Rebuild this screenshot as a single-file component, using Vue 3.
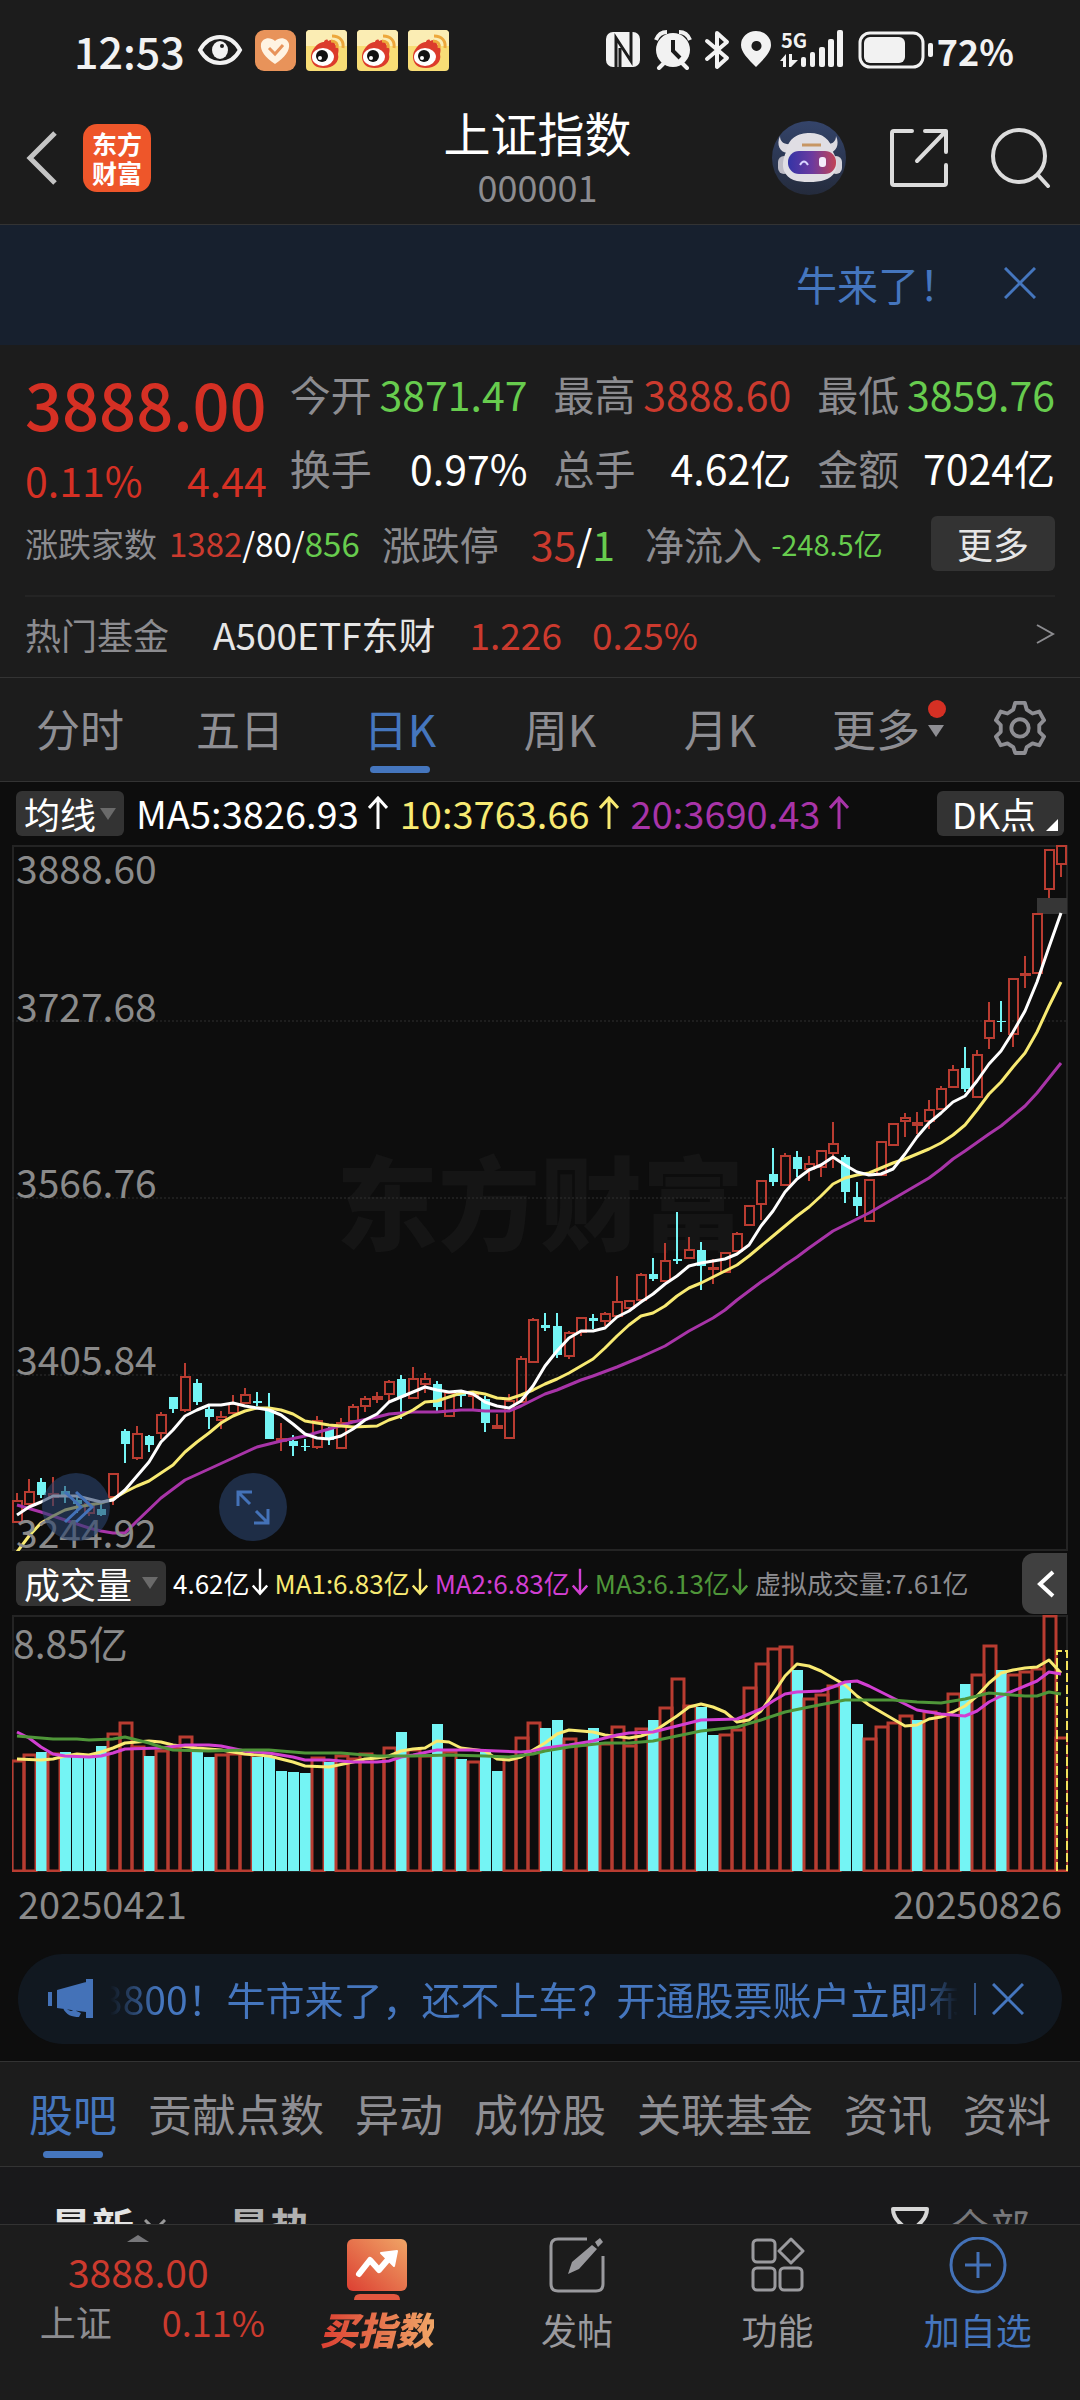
<template>
  <div class="app">
    <div class="status">
      <span class="clock">12:53</span>
      <svg class="eye" viewBox="0 0 46 32">
        <path d="M3 16C8 7 15 3 23 3s15 4 20 13c-5 9-12 13-20 13S8 25 3 16z" fill="none" stroke="#f2f2f2" stroke-width="4" />
        <ellipse cx="23" cy="16" rx="8" ry="9" fill="#f2f2f2" />
        <circle cx="25" cy="12" r="2" fill="#1c1c1c" />
      </svg>
      <svg class="app-icon" viewBox="0 0 41 41">
        <rect width="41" height="41" rx="9" fill="#e8935a" />
        <path d="M20 34C10 27 5 21 6 14c1-6 9-8 14-3 5-5 13-3 14 3 1 7-4 13-14 20z" fill="#fff3e2" />
        <path d="M14 18l6 6 8-9" fill="none" stroke="#e8935a" stroke-width="3" />
      </svg>
      <svg v-for="n in 3" :key="n" class="app-icon" viewBox="0 0 41 41">
        <rect width="41" height="41" rx="4" fill="#f8dd76" />
        <path d="M0 4a4 4 0 0 1 4-4h33a4 4 0 0 1 4 4v12H0z" fill="#fbedb4" />
        <path d="M5 28C4 20 13 11 18 12c0-2 4-4 4-1 4-2 8-1 7 4 4 1 4 5 3 9 2 8-5 14-14 14S6 34 5 28z" fill="#dc3b2c" />
        <ellipse cx="17" cy="27" rx="11" ry="9" fill="#fff" />
        <circle cx="16" cy="26" r="6" fill="#111" />
        <circle cx="14" cy="28" r="2" fill="#fff" />
        <path d="M25 11c5 0 7 3 6 7M26 6c8 0 12 5 11 12" fill="none" stroke="#eda83c" stroke-width="3" />
      </svg>
      <svg class="sys" viewBox="0 0 240 40">
        <g fill="#f2f2f2">
          <rect x="0" y="2" width="34" height="35" rx="7" />
          <path d="M10 37V8l15 23V2M14 37V18" fill="none" stroke="#1c1c1c" stroke-width="3" />
          <circle cx="67" cy="20" r="17" />
          <path d="M67 10v11l7 7" fill="none" stroke="#1c1c1c" stroke-width="4" />
          <path d="M50 10q3-8 11-8M84 10q-3-8-11-8" fill="none" stroke="#f2f2f2" stroke-width="4" />
          <path d="M58 33l-5 5M76 33l5 5" stroke="#f2f2f2" stroke-width="4" stroke-linecap="round" />
          <path d="M101 11l20 17-10 9V3l10 9-20 17" fill="none" stroke="#f2f2f2" stroke-width="4" stroke-linejoin="round" stroke-linecap="round" />
          <path fill-rule="evenodd" d="M150 37c-8-8-15-15-15-22a15 14 0 0 1 30 0c0 7-7 14-15 22zM150 11a5 5 0 1 0 1 0z" />
          <path d="M174 31l6-7v13h-3v-6zM183 24h3v6h6l-7 7h-2z" />
          <rect x="195" y="27" width="5" height="10" rx="2" />
          <rect x="204" y="22" width="5" height="15" rx="2" />
          <rect x="213" y="17" width="6" height="20" rx="2" />
          <rect x="222" y="9" width="6" height="28" rx="2" />
          <rect x="231" y="0" width="6" height="37" rx="2" />
          <text x="175" y="18" class="net">5G</text>
        </g>
      </svg>
      <svg class="battery" viewBox="0 0 76 40">
        <rect x="2" y="3" width="63" height="34" rx="10" fill="none" stroke="#f2f2f2" stroke-width="3" />
        <rect x="6" y="7" width="41" height="26" rx="6" fill="#f2f2f2" />
        <rect x="70" y="13" width="5" height="14" rx="2" fill="#f2f2f2" />
      </svg>
      <span class="percent">72%</span>
    </div>

    <header>
      <div class="side">
        <button class="icon-btn" aria-label="返回">
          <svg class="back" viewBox="0 0 36 56"><path d="M31 3L6 28l25 25" fill="none" stroke="#c4c4c4" stroke-width="5" /></svg>
        </button>
        <a href="#" class="logo"><span>东方</span><span>财富</span></a>
      </div>
      <div class="title">
        <h1>上证指数</h1>
        <p>000001</p>
      </div>
      <div class="side right">
        <button class="icon-btn" aria-label="助手">
          <svg class="bot" viewBox="0 0 75 75">
            <defs>
              <linearGradient id="visor" x1="0" x2="1">
                <stop offset="0" stop-color="#3434a6" />
                <stop offset="0.5" stop-color="#6b3a9f" />
                <stop offset="1" stop-color="#c24456" />
              </linearGradient>
              <linearGradient id="botBg" x1="0" y1="0" x2="0" y2="1">
                <stop offset="0" stop-color="#34446a" />
                <stop offset="1" stop-color="#242b3c" />
              </linearGradient>
            </defs>
            <circle cx="37" cy="37" r="37" fill="url(#botBg)" />
            <path d="M8 15c-4 9 0 16 7 17l8-10C14 25 8 22 8 15zM64 15c4 9 0 16-7 17l-8-10c9 3 15 0 15-7z" fill="#dcdae0" />
            <rect x="6" y="35" width="12" height="18" rx="6" fill="#bdbbc5" />
            <rect x="58" y="35" width="12" height="18" rx="6" fill="#d5d3da" />
            <path d="M14 31C16 17 26 12 38 12s21 6 23 19c4 7 5 14 2 20-5 8-14 10-26 10s-21-2-25-11c-2-6-1-12 2-19z" fill="#e0dee4" />
            <rect x="16" y="30" width="48" height="23" rx="11" fill="url(#visor)" />
            <path d="M30 24h19" stroke="#c79664" stroke-width="3" />
            <path d="M28 44q4-7 8 0" fill="none" stroke="#d8d4ff" stroke-width="2" />
            <rect x="47" y="36" width="7" height="10" rx="3" fill="#f3ecfb" />
          </svg>
        </button>
        <button class="icon-btn" aria-label="分享">
          <svg class="share" viewBox="0 0 60 60">
            <path d="M23 3H5q-2 0-2 2v50q0 2 2 2h50q2 0 2-2V37M36 3h21v21M57 3L28 33" fill="none" stroke="#dcdcdc" stroke-width="4" stroke-linecap="round" stroke-linejoin="round" />
          </svg>
        </button>
        <button class="icon-btn" aria-label="搜索">
          <svg class="search" viewBox="0 0 60 60">
            <circle cx="28" cy="28" r="26" fill="none" stroke="#dcdcdc" stroke-width="4" />
            <path d="M47 47l10 11" stroke="#dcdcdc" stroke-width="4" stroke-linecap="round" />
          </svg>
        </button>
      </div>
    </header>

    <div class="banner">
      <a href="#">牛来了！</a>
      <button class="icon-btn" aria-label="关闭">
        <svg class="cross" viewBox="0 0 32 32"><path d="M1 1l30 30M31 1L1 31" stroke="#4576be" stroke-width="3" /></svg>
      </button>
    </div>

    <section class="quote">
      <div class="summary">
        <div class="now">
          <strong>3888.00</strong>
          <p><span>0.11%</span><span>4.44</span></p>
        </div>
        <dl class="stats">
          <div v-for="s in stats" :key="s.label">
            <dt>{{ s.label }}</dt>
            <dd :class="s.tone">{{ s.value }}</dd>
          </div>
        </dl>
      </div>
      <div class="breadth">
        <p class="small"><span>涨跌家数</span><b><i class="up">1382</i>/80/<i class="down">856</i></b></p>
        <p class="limit"><span>涨跌停</span><b><i class="up">35</i>/<i class="down">1</i></b></p>
        <p class="flow"><span>净流入</span><b class="down">-248.5亿</b></p>
        <button class="more">更多</button>
      </div>
      <a href="#" class="fund">
        <span class="muted">热门基金</span>
        <span class="fund-name">A500ETF东财</span>
        <span class="up">1.226</span>
        <span class="up">0.25%</span>
        <svg class="arrow" viewBox="0 0 20 20"><path d="M2 1l16 9-16 9" fill="none" stroke="#8c8c90" stroke-width="2" /></svg>
      </a>
    </section>

    <nav class="periods">
      <button v-for="p in periods" :key="p" :class="{ active: p === period }" @click="period = p">
        {{ p }}
      </button>
      <button class="more-period">更多<i class="caret"></i><i class="dot"></i></button>
      <button class="settings" aria-label="设置">
        <svg class="gear" viewBox="0 0 54 58">
          <path d="M22 3h10l2 7 6 4 7-2 5 9-5 5v7l5 5-5 9-7-2-6 4-2 6H22l-2-6-6-4-7 2-5-9 5-5v-7l-5-5 5-9 7 2 6-4z" fill="none" stroke="#8e8e93" stroke-width="4" stroke-linejoin="round" />
          <circle cx="27" cy="29" r="9" fill="none" stroke="#8e8e93" stroke-width="4" />
        </svg>
      </button>
    </nav>

    <section class="charts">
      <div class="legend">
        <button class="chip">均线<i class="chip-caret"></i></button>
        <span v-for="m in averages" :key="m.text" :class="m.cls">
          {{ m.text }}
          <svg class="trend" viewBox="0 0 20 34"><path d="M10 33V3M1 12l9-10 9 10" fill="none" stroke="currentColor" stroke-width="3" /></svg>
        </span>
        <button class="chip dk">DK点<i class="corner"></i></button>
      </div>

      <div class="price">
        <svg class="plot" viewBox="0 0 1056 706">
          <text x="528" y="398" class="watermark">东方财富</text>
          <rect x="1" y="1" width="1054" height="704" fill="none" stroke="#242424" stroke-width="2" />
          <path d="M0 176H1056M0 353H1056M0 530H1056" stroke="#303030" stroke-dasharray="2 2" />
          <rect x="1025" y="53" width="30" height="16" fill="#363636" />
          <g v-for="(c, i) in candles" :key="i" :class="c.down ? 'fall' : 'rise'">
            <path :d="c.wick" />
            <rect :x="c.x - 4" :y="c.top" :width="9" :height="c.height" />
          </g>
          <polyline :points="line(ma20)" class="ln violet" />
          <polyline :points="line(ma10)" class="ln yellow" />
          <polyline :points="line(ma5)" class="ln white" />
          <text v-for="t in ticks" :key="t.text" x="4" :y="t.y" class="tick">{{ t.text }}</text>
        </svg>
        <button class="round forward" aria-label="前进">
          <svg viewBox="0 0 68 68"><path d="M23 19l16 15-16 15M34 19l16 15-16 15" fill="none" stroke="#4472b8" stroke-width="3" /></svg>
        </button>
        <button class="round expand" aria-label="全屏">
          <svg viewBox="0 0 68 68"><path d="M19 33V19h14M19 19l12 12M49 36v14H35M49 50L37 38" fill="none" stroke="#4472b8" stroke-width="3" /></svg>
        </button>
      </div>

      <div class="legend volume-legend">
        <button class="chip vol-chip">成交量<i class="chip-caret"></i></button>
        <span v-for="m in volumes" :key="m.text" :class="m.cls">
          {{ m.text }}
          <svg v-if="m.cls !== 'grey'" class="trend" viewBox="0 0 20 34"><path d="M10 1v30M1 22l9 10 9-10" fill="none" stroke="currentColor" stroke-width="3" /></svg>
        </span>
        <button class="fold" aria-label="展开">
          <svg viewBox="0 0 18 28"><path d="M16 2L3 14l13 12" fill="none" stroke="#fff" stroke-width="4" /></svg>
        </button>
      </div>

      <svg class="plot volume" viewBox="0 0 1056 257">
        <rect x="1" y="1" width="1054" height="255" fill="none" stroke="#242424" stroke-width="2" />
        <g v-for="(b, i) in bars" :key="i" :class="b.down ? 'fall' : 'rise'">
          <rect :x="b.x - 5" :y="b.top" :width="b.down ? 11 : 12" :height="256 - b.top" />
        </g>
        <path d="M1045 256V36h10v220" fill="none" stroke="#f2e35c" stroke-width="2" stroke-dasharray="9 3" />
        <polyline :points="line(vol1)" class="ln yellow" />
        <polyline :points="line(vol2)" class="ln magenta" />
        <polyline :points="line(vol3)" class="ln green" />
        <text x="1" y="44" class="tick">8.85亿</text>
      </svg>
      <div class="dates"><span>20250421</span><span>20250826</span></div>

      <div class="notice">
        <svg class="horn" viewBox="0 0 46 40">
          <path d="M0 13h4v14H0zM9 11L38 3v30L9 29zM38 0h7v39h-7zM15 29l8 3 3-1 7 3-2 4c-7 0-13-2-16-9z" fill="#4472b8" />
        </svg>
        <a href="#"><span>3800！牛市来了，还不上车？开通股票账户立即布局</span></a>
        <button class="icon-btn" aria-label="关闭通知">
          <svg class="cross" viewBox="0 0 32 32"><path d="M1 1l30 30M31 1L1 31" stroke="#4576be" stroke-width="3" /></svg>
        </button>
      </div>
    </section>

    <nav class="topics">
      <button v-for="t in topics" :key="t" :class="{ active: t === topic }" @click="topic = t">{{ t }}</button>
    </nav>

    <section class="feed">
      <button class="sort on">最新<svg viewBox="0 0 22 14"><path d="M1 1l10 10L21 1" fill="none" stroke="#9a9a9a" stroke-width="3" /></svg></button>
      <button class="sort">最热</button>
      <button class="filter">
        <svg viewBox="0 0 40 40"><path d="M3 3h34q0 9-10 17v13l-14 5V20Q3 12 3 3z" fill="none" stroke="#d6d6d6" stroke-width="4" stroke-linejoin="round" /></svg>全部
      </button>
    </section>

    <nav class="dock">
      <a href="#" class="index">
        <i class="peak"></i>
        <b>3888.00</b>
        <p><span>上证</span><em>0.11%</em></p>
      </a>
      <a href="#" class="buy">
        <svg viewBox="0 0 62 72">
          <defs>
            <linearGradient id="buyFill" x1="0" y1="1" x2="1" y2="0">
              <stop offset="0" stop-color="#dc3f32" />
              <stop offset="1" stop-color="#f0a566" />
            </linearGradient>
          </defs>
          <rect x="1" y="2" width="60" height="52" rx="6" fill="url(#buyFill)" />
          <path d="M8 63q0-6 6-6h34q6 0 6 6z" fill="#e2573f" />
          <path d="M13 37l11-14 9 10 12-14" fill="none" stroke="#fff" stroke-width="6" stroke-linejoin="round" stroke-linecap="round" />
          <path d="M35 16l16-2-3 15z" fill="#fff" stroke="#fff" stroke-width="2" stroke-linejoin="round" />
        </svg>
        <span>买指数</span>
      </a>
      <a href="#">
        <svg viewBox="0 0 62 72">
          <path d="M41 2H12q-7 0-7 7v38q0 7 7 7h38q7 0 7-7V19" fill="none" stroke="#9a9a9e" stroke-width="3" />
          <path d="M22 37l4-12 20-17 5 4-18 20zM49 5l5-4 3 4-5 5z" fill="#9a9a9e" />
        </svg>
        <span>发帖</span>
      </a>
      <a href="#">
        <svg viewBox="0 0 62 72" fill="none" stroke="#9a9a9e" stroke-width="3">
          <rect x="7" y="3" width="22" height="22" rx="4" />
          <rect x="7" y="31" width="22" height="22" rx="4" />
          <rect x="34" y="31" width="22" height="22" rx="4" />
          <path d="M45 2l12 12-12 12-12-12z" stroke-linejoin="round" />
        </svg>
        <span>功能</span>
      </a>
      <a href="#" class="add">
        <svg viewBox="0 0 62 72" fill="none" stroke="#4472b8" stroke-width="3">
          <circle cx="31" cy="28" r="27" />
          <path d="M18 28h26M31 15v26" />
        </svg>
        <span>加自选</span>
      </a>
    </nav>
  </div>
</template>

<script setup>
import { ref } from "vue";

const stats = [
  { label: "今开", value: "3871.47", tone: "down" },
  { label: "最高", value: "3888.60", tone: "up" },
  { label: "最低", value: "3859.76", tone: "down" },
  { label: "换手", value: "0.97%", tone: "" },
  { label: "总手", value: "4.62亿", tone: "" },
  { label: "金额", value: "7024亿", tone: "" },
];

const periods = ["分时", "五日", "日K", "周K", "月K"];
const period = ref("日K");

const topics = ["股吧", "贡献点数", "异动", "成份股", "关联基金", "资讯", "资料"];
const topic = ref("股吧");

const averages = [
  { text: "MA5:3826.93", cls: "white" },
  { text: "10:3763.66", cls: "yellow" },
  { text: "20:3690.43", cls: "violet" },
];

const volumes = [
  { text: "4.62亿", cls: "white" },
  { text: "MA1:6.83亿", cls: "yellow" },
  { text: "MA2:6.83亿", cls: "magenta" },
  { text: "MA3:6.13亿", cls: "green" },
  { text: "虚拟成交量:7.61亿", cls: "grey" },
];

const ticks = [
  { text: "3888.60", y: 39 },
  { text: "3727.68", y: 177 },
  { text: "3566.76", y: 353 },
  { text: "3405.84", y: 530 },
  { text: "3244.92", y: 703 },
];

const STEP = 12;
const xAt = (i) => 5 + i * STEP;

// high, body top, body bottom, low; one entry per trading day
const days = [
  [648, 656, 677, 678], [634, 647, 659, 660], [633, 637, 650, 653], [632, 649, 652, 661],
  [641, 646, 650, 658], [652, 655, 659, 668], [656, 659, 668, 671], [656, 664, 670, 671],
  [628, 629, 652, 660], [584, 586, 599, 618], [581, 589, 613, 615], [590, 591, 600, 607],
  [567, 570, 588, 594], [552, 552, 564, 568], [518, 532, 565, 567], [534, 538, 557, 560],
  [561, 564, 572, 584], [566, 572, 575, 584], [550, 559, 568, 568], [543, 550, 558, 558],
  [547, 556, 558, 561], [548, 564, 594, 594], [578, 594, 596, 606], [590, 596, 601, 611],
  [594, 601, 602, 606], [571, 576, 602, 604], [582, 584, 595, 600], [573, 578, 603, 603],
  [559, 562, 576, 577], [551, 554, 561, 567], [547, 552, 554, 558], [535, 537, 549, 556],
  [530, 534, 552, 574], [522, 534, 553, 553], [528, 534, 539, 548], [536, 539, 562, 566],
  [548, 548, 571, 571], [547, 549, 551, 562], [549, 550, 551, 565], [551, 554, 578, 587],
  [569, 581, 583, 583], [549, 556, 593, 594], [511, 514, 557, 558], [473, 475, 517, 518],
  [468, 480, 483, 486], [468, 481, 510, 513], [486, 488, 511, 514], [472, 473, 487, 491],
  [469, 473, 476, 484], [467, 469, 476, 481], [431, 457, 471, 472], [455, 456, 463, 464],
  [428, 430, 455, 455], [413, 429, 434, 436], [398, 416, 436, 437], [367, 414, 416, 419],
  [392, 405, 413, 413], [397, 405, 421, 445], [414, 423, 424, 439], [407, 408, 427, 427],
  [387, 389, 406, 406], [360, 361, 380, 380], [335, 336, 359, 375], [303, 329, 337, 341],
  [308, 311, 340, 341], [306, 312, 324, 332], [311, 319, 324, 336], [305, 306, 322, 332],
  [277, 299, 308, 323], [310, 312, 347, 358], [337, 352, 361, 371], [335, 335, 376, 376],
  [297, 297, 330, 330], [279, 279, 300, 301], [268, 273, 276, 292], [267, 278, 280, 289],
  [255, 265, 276, 284], [241, 244, 264, 265], [220, 225, 242, 243], [202, 223, 244, 247],
  [205, 210, 252, 253], [157, 176, 193, 204], [156, 176, 177, 187], [134, 134, 189, 202],
  [111, 129, 130, 143], [69, 69, 128, 128], [5, 5, 44, 53], [1, 1, 19, 32],
];
const fallDays = [2, 4, 5, 7, 9, 11, 13, 15, 16, 20, 21, 23, 24, 26, 32, 35, 37, 39, 44, 45, 48, 53, 55, 57, 63, 65, 69, 70, 79, 82];

const candles = days.map(([high, top, bottom, low], i) => {
  const x = xAt(i);
  return {
    x,
    top,
    height: Math.max(bottom - top, 1),
    down: fallDays.includes(i),
    wick: `M${x} ${high}V${top}M${x} ${bottom}V${low}`,
  };
});

const tops = [
  146, 140, 137, 139, 137, 140, 141, 131, 119, 108, 132, 141, 136, 133, 122, 136,
  142, 140, 139, 139, 142, 141, 156, 157, 158, 143, 147, 141, 144, 139, 142, 133,
  117, 135, 141, 109, 137, 144, 147, 136, 156, 144, 123, 108, 113, 105, 124, 130,
  113, 129, 112, 131, 114, 105, 93, 64, 91, 92, 120, 120, 115, 73, 49, 34,
  32, 55, 84, 80, 71, 67, 109, 124, 112, 108, 101, 105, 97, 101, 79, 69,
  60, 31, 55, 60, 57, 54, 1, 123,
];
const fallBars = [2, 4, 5, 6, 7, 11, 15, 16, 20, 21, 22, 23, 24, 26, 32, 35, 37, 39, 40, 44, 45, 48, 53, 57, 58, 65, 69, 70, 75, 79, 82];
const bars = tops.map((top, i) => ({ x: xAt(i), top, down: fallBars.includes(i) }));

// flat [day, y, day, y, ...] lists
const ma5 = [
  0, 670, 1, 662, 2, 657, 3, 651, 4, 651, 5, 651, 6, 654, 7, 657, 8, 655, 9, 645, 10, 631, 11, 617, 12, 597,
  13, 585, 14, 571, 15, 565, 16, 560, 17, 560, 18, 558, 19, 561, 20, 563, 21, 565, 22, 570, 23, 579, 24, 589,
  25, 593, 26, 594, 27, 591, 28, 584, 29, 575, 30, 569, 31, 557, 32, 552, 33, 547, 34, 542, 35, 545, 36, 547,
  37, 546, 38, 549, 39, 557, 40, 561, 41, 563, 42, 556, 43, 541, 44, 521, 45, 506, 46, 493, 47, 486, 48, 486,
  49, 483, 50, 472, 51, 466, 52, 457, 53, 449, 54, 439, 55, 431, 56, 421, 57, 418, 58, 416, 59, 414, 60, 409,
  61, 400, 62, 381, 63, 366, 64, 347, 65, 334, 66, 325, 67, 320, 68, 312, 69, 320, 70, 327, 71, 330, 72, 329,
  73, 324, 74, 309, 75, 292, 76, 278, 77, 268, 78, 257, 79, 251, 80, 236, 81, 219, 82, 206, 83, 187, 84, 166,
  85, 137, 86, 102, 87, 68,
];
const ma10 = [
  0, 707, 1, 691, 2, 678, 3, 671, 4, 665, 5, 662, 6, 660, 7, 658, 8, 654, 9, 647, 10, 641, 11, 636, 12, 628,
  13, 620, 14, 607, 15, 597, 16, 588, 17, 578, 18, 571, 19, 566, 20, 563, 21, 563, 22, 565, 23, 569, 24, 576,
  25, 578, 26, 580, 27, 581, 28, 582, 30, 581, 31, 575, 32, 571, 33, 565, 34, 557, 35, 556, 36, 552, 37, 548,
  38, 547, 39, 549, 40, 553, 41, 554, 42, 550, 43, 545, 44, 539, 45, 534, 46, 528, 47, 521, 48, 514, 49, 503,
  50, 491, 51, 480, 52, 471, 53, 468, 54, 461, 55, 451, 56, 443, 57, 438, 58, 432, 59, 426, 60, 420, 61, 411,
  62, 401, 63, 391, 64, 381, 65, 371, 66, 362, 67, 351, 68, 339, 69, 333, 70, 330, 71, 328, 72, 323, 73, 318,
  74, 314, 75, 309, 76, 304, 77, 298, 78, 290, 79, 280, 80, 265, 81, 249, 82, 237, 83, 222, 84, 208, 85, 187,
  86, 161, 87, 137,
];
const ma20 = [
  0, 660, 2, 667, 4, 675, 6, 683, 7, 686, 8, 688, 9, 688, 10, 676, 12, 653, 14, 635, 16, 624, 18, 613, 20, 602,
  22, 596, 24, 591, 26, 584, 28, 577, 30, 572, 31, 569, 33, 567, 35, 567, 37, 565, 38, 565, 39, 566, 41, 566,
  42, 561, 43, 555, 44, 549, 45, 545, 46, 540, 47, 535, 48, 531, 50, 522, 51, 517, 52, 512, 54, 501, 56, 486,
  58, 473, 59, 465, 60, 455, 61, 446, 62, 437, 63, 429, 64, 420, 65, 412, 66, 403, 68, 386, 69, 380, 71, 368,
  73, 354, 75, 340, 76, 333, 77, 324, 78, 314, 79, 306, 81, 289, 82, 281, 84, 261, 85, 248, 86, 233, 87, 218,
];
const vol1 = [
  0, 144, 2, 145, 3, 144, 4, 141, 5, 139, 6, 140, 7, 137, 8, 133, 9, 128, 10, 127, 11, 126, 12, 127, 13, 130,
  15, 133, 17, 135, 18, 137, 19, 139, 20, 140, 21, 141, 22, 144, 23, 147, 24, 151, 26, 152, 28, 147, 29, 144,
  30, 143, 31, 141, 32, 136, 33, 134, 34, 133, 35, 126, 36, 127, 37, 133, 39, 136, 40, 144, 41, 145, 42, 142,
  43, 135, 44, 128, 45, 119, 46, 115, 48, 117, 49, 120, 51, 123, 52, 121, 53, 117, 54, 109, 55, 101, 56, 92,
  57, 89, 58, 92, 59, 97, 60, 107, 61, 105, 62, 96, 63, 79, 64, 61, 65, 49, 66, 51, 67, 56, 69, 70, 70, 81,
  71, 90, 72, 97, 74, 111, 75, 110, 76, 104, 77, 102, 78, 97, 79, 91, 80, 81, 81, 68, 82, 58, 83, 55, 84, 53,
  85, 52, 86, 45, 87, 58,
];
const vol2 = [
  0, 117, 1, 123, 2, 132, 3, 139, 4, 141, 6, 142, 7, 141, 8, 138, 9, 134, 12, 133, 14, 130, 16, 130, 17, 131,
  19, 136, 21, 138, 23, 142, 24, 145, 26, 145, 28, 147, 30, 147, 31, 146, 32, 142, 33, 140, 35, 135, 38, 135,
  40, 136, 42, 137, 43, 136, 44, 133, 46, 130, 48, 126, 50, 120, 51, 118, 53, 117, 55, 111, 57, 105, 60, 104,
  62, 94, 63, 86, 64, 79, 65, 77, 67, 76, 68, 72, 69, 67, 70, 66, 71, 71, 73, 83, 75, 95, 77, 99, 79, 101,
  80, 96, 81, 87, 82, 81, 84, 71, 85, 66, 86, 57, 87, 59,
];
const vol3 = [
  0, 121, 3, 124, 5, 124, 6, 125, 8, 124, 9, 122, 10, 125, 11, 128, 12, 132, 13, 135, 16, 136, 19, 135, 21, 135,
  24, 138, 27, 138, 30, 141, 33, 141, 36, 140, 39, 141, 41, 142, 43, 139, 44, 136, 46, 132, 49, 128, 51, 128,
  53, 126, 55, 121, 57, 116, 60, 112, 62, 105, 64, 97, 66, 92, 69, 85, 73, 85, 75, 87, 77, 88, 79, 84, 81, 78,
  82, 79, 84, 81, 85, 81, 86, 77, 87, 79,
];

const line = (list) => {
  const points = [];
  for (let i = 0; i < list.length; i += 2) {
    points.push(`${xAt(list[i])},${list[i + 1]}`);
  }
  return points.join(" ");
};
</script>

<style>
body {
  margin: 0;
  background: #1c1c1c;
}
</style>

<style scoped>
* {
  margin: 0;
  padding: 0;
  box-sizing: border-box;
}

.app {
  display: flex;
  flex-direction: column;
  height: 100vh;
  background: #1c1c1c;
  color: #fff;
  font-family: "Noto Sans CJK SC", sans-serif;
  font-size: 41px;
  white-space: nowrap;
}

button {
  border: none;
  background: none;
  color: inherit;
  font: inherit;
  cursor: pointer;
}

a {
  color: inherit;
  text-decoration: none;
}

i,
em {
  font-style: normal;
}

b {
  font-weight: 400;
}

svg {
  display: block;
  flex: none;
}

.up {
  color: #cb3a2e;
}

.down {
  color: #67cc4e;
}

.white {
  color: #fff;
  stroke: #fff;
}

.yellow {
  color: #f8ea72;
  stroke: #f8ea72;
}

.violet {
  color: #a834a8;
  stroke: #a834a8;
}

.magenta {
  color: #d23fd2;
  stroke: #d23fd2;
}

.green {
  color: #4f9639;
  stroke: #4f9639;
}

.grey,
.muted {
  color: #8c8c90;
}

/* status bar */
.status {
  display: flex;
  align-items: center;
  height: 100px;
  padding: 0 66px 0 74px;
  color: #f2f2f2;
  font-weight: 500;
}

.clock {
  font-size: 43px;
}

.eye {
  width: 46px;
  margin: 0 12px;
}

.app-icon {
  width: 41px;
  margin-right: 10px;
}

.sys {
  width: 240px;
  margin-left: auto;
}

.net {
  font-size: 20px;
  font-weight: 700;
}

.battery {
  width: 76px;
  margin: 0 3px 0 12px;
}

.percent {
  font-size: 36px;
  font-weight: 700;
}

/* title bar */
header {
  display: grid;
  grid-template-columns: 1fr auto 1fr;
  align-items: center;
  padding: 4px 29px 12px 24px;
  border-bottom: 1px solid #333;
}

.side {
  display: flex;
  align-items: center;
  gap: 23px;
}

.right {
  justify-content: flex-end;
  gap: 42px;
}

.back {
  width: 36px;
}

.logo {
  display: flex;
  flex-direction: column;
  justify-content: center;
  align-items: center;
  width: 68px;
  height: 68px;
  border-radius: 14px;
  background: #ee562a;
  font-size: 25px;
  font-weight: 700;
  line-height: 29px;
}

.title {
  text-align: center;
}

.title h1 {
  font-size: 47px;
  font-weight: 400;
  line-height: 56px;
}

.title p {
  color: #8c8c90;
  font-size: 36px;
  line-height: 52px;
}

.bot {
  width: 75px;
}

.share,
.search {
  width: 60px;
}

.banner {
  display: flex;
  justify-content: flex-end;
  align-items: center;
  gap: 44px;
  padding: 28px 44px 32px;
  background: #17202e;
  color: #4576be;
  line-height: 60px;
}

.cross {
  width: 32px;
}

/* quote */
.quote {
  padding: 18px 25px 0;
  border-bottom: 1px solid #333;
}

.summary {
  display: grid;
  grid-template-columns: 1fr 3fr;
  gap: 5px;
}

.now {
  padding-right: 18px;
  color: #d53024;
}

.now strong {
  display: block;
  margin-top: 4px;
  font-size: 65px;
  font-weight: 500;
  line-height: 72px;
}

.now p {
  display: flex;
  justify-content: space-between;
  margin-top: 10px;
  line-height: 60px;
}

.stats {
  display: grid;
  grid-template-columns: repeat(3, 1fr);
  align-content: start;
  gap: 14px 26px;
  line-height: 60px;
}

.stats div {
  display: flex;
  justify-content: space-between;
}

.stats dt,
.breadth span {
  color: #8c8c90;
}

.breadth {
  display: flex;
  align-items: center;
  gap: 22px;
  margin-top: 4px;
}

.breadth p {
  display: flex;
  align-items: center;
}

.small {
  gap: 12px;
  font-size: 33px;
}

.limit {
  gap: 32px;
  margin-right: 8px;
}

.limit span,
.flow span {
  font-size: 39px;
}

.flow {
  gap: 9px;
}

.flow b {
  font-size: 29px;
}

.more {
  margin-left: auto;
  padding: 0 26px;
  border-radius: 6px;
  background: #333;
  color: #e6e6e6;
  font-size: 36px;
  line-height: 55px;
}

.fund {
  display: flex;
  align-items: center;
  margin-top: 22px;
  padding: 7px 0 13px;
  border-top: 2px solid #242424;
  font-size: 37px;
  line-height: 60px;
}

.fund .muted {
  font-size: 36px;
}

.fund-name {
  margin: 0 34px 0 44px;
  color: #e6e6e6;
}

.fund .up {
  margin-right: 30px;
}

.arrow {
  width: 20px;
  margin-left: auto;
}

/* period tabs */
.periods {
  display: flex;
  align-items: stretch;
  height: 104px;
  border-bottom: 1px solid #333;
  color: #8e8e93;
}

.periods button {
  position: relative;
  flex: 4;
  padding-bottom: 4px;
  font-size: 44px;
}

.periods .settings {
  flex: 3;
}

.periods .more-period {
  text-indent: 16px;
}

.periods .active,
.topics .active {
  color: #4576be;
}

.active::after {
  content: "";
  position: absolute;
  left: 50%;
  bottom: 8px;
  width: 60px;
  height: 7px;
  margin-left: -30px;
  border-radius: 4px;
  background: #4576be;
}

.more-period .caret {
  display: inline-block;
  margin: 0 0 10px 8px;
  border: 8px solid transparent;
  border-top: 12px solid #8e8e93;
  border-bottom: none;
}

.dot {
  position: absolute;
  top: 22px;
  right: 14px;
  width: 18px;
  height: 18px;
  border-radius: 50%;
  background: #d53024;
}

.gear {
  width: 52px;
  margin: 0 auto;
}

/* charts */
.charts {
  background: #0d0d0d;
}

.legend {
  display: flex;
  align-items: center;
  gap: 12px;
  height: 63px;
  padding: 0 16px;
  font-size: 38px;
}

.legend span {
  display: flex;
  align-items: center;
  gap: 9px;
  padding-bottom: 2px;
  stroke: none;
}

.trend {
  width: 20px;
}

.chip {
  position: relative;
  display: flex;
  align-items: center;
  gap: 4px;
  padding: 0 8px;
  border-radius: 6px;
  background: #333;
  font-size: 36px;
  line-height: 45px;
}

.chip-caret {
  border: 8px solid transparent;
  border-top: 12px solid #6a6a6a;
  border-bottom: none;
}

.dk {
  margin-left: auto;
  padding: 0 28px 0 15px;
}

.corner {
  position: absolute;
  right: 6px;
  bottom: 5px;
  border-left: 12px solid transparent;
  border-bottom: 12px solid #fff;
}

.price {
  position: relative;
}

.plot {
  width: calc(100% - 24px);
  margin: 0 12px;
}

.tick {
  fill: #8a8a8a;
  font-size: 39px;
}

.watermark {
  fill: #151515;
  font-size: 102px;
  font-weight: 900;
  text-anchor: middle;
}

.rise {
  fill: none;
  stroke: #b93c31;
  stroke-width: 2;
}

.volume .rise {
  stroke-width: 3;
}

.fall {
  fill: #74f4f4;
  stroke: none;
}

.fall path {
  stroke: #74f4f4;
  stroke-width: 2;
}

.ln {
  fill: none;
  stroke-width: 3;
  stroke-linejoin: round;
}

.round {
  position: absolute;
  bottom: 10px;
  width: 68px;
  height: 68px;
  border-radius: 50%;
  background: rgba(41, 67, 108, 0.6);
}

.forward {
  left: 42px;
}

.expand {
  left: 219px;
}

.volume-legend {
  height: 64px;
  gap: 7px;
  padding-right: 13px;
  font-size: 26px;
}

.volume-legend span {
  gap: 2px;
}

.volume-legend .trend {
  width: 16px;
}

.vol-chip {
  gap: 10px;
}

.fold {
  align-self: stretch;
  margin: 2px 0 1px auto;
  padding: 0 12px 0 15px;
  border-radius: 12px 0 0 12px;
  background: #404040;
}

.fold svg {
  width: 18px;
}

.dates {
  display: flex;
  justify-content: space-between;
  padding: 3px 18px 1px;
  color: #8a8a8a;
  font-size: 38px;
  line-height: 56px;
}

.notice {
  display: flex;
  align-items: center;
  height: 90px;
  margin: 22px 18px 17px;
  padding: 0 38px 0 30px;
  border-radius: 45px;
  background: #111820;
  color: #4576be;
  font-size: 39px;
}

.horn {
  width: 46px;
  margin-right: 16px;
}

.notice a {
  flex: 1;
  overflow: hidden;
  min-width: 0;
  padding-bottom: 2px;
  -webkit-mask-image: linear-gradient(90deg, transparent, #000 48px, #000 calc(100% - 40px), transparent);
  mask-image: linear-gradient(90deg, transparent, #000 48px, #000 calc(100% - 40px), transparent);
}

.notice a span {
  margin-left: -9px;
}

.notice button {
  margin-left: 16px;
  padding-left: 16px;
  border-left: 2px solid #35588c;
}

/* community */
.topics {
  display: flex;
  justify-content: space-between;
  padding: 0 29px;
  border-top: 1px solid #333;
  border-bottom: 1px solid #333;
  color: #8e8e93;
}

.topics button {
  position: relative;
  padding: 2px 0 4px;
  font-size: 44px;
  line-height: 98px;
}

.feed {
  display: flex;
  flex: 1;
  align-items: flex-start;
  gap: 62px;
  overflow: hidden;
  min-height: 0;
  padding: 28px 50px 0;
  background: #19191b;
}

.feed button {
  display: flex;
  align-items: center;
  gap: 10px;
  flex: none;
  color: #b0b0b0;
  font-size: 42px;
  font-weight: 700;
  line-height: 62px;
}

.feed .on {
  color: #e4e4e4;
}

.feed .on svg {
  width: 22px;
}

.feed .filter {
  gap: 20px;
  margin-left: auto;
  color: #77777a;
  font-size: 40px;
  font-weight: 400;
}

.filter svg {
  width: 40px;
}

.dock {
  display: grid;
  grid-template-columns: 1.38fr repeat(4, 1fr);
  padding-right: 2px;
  border-top: 1px solid #333;
  background: #1c1c1c;
  color: #9a9a9e;
  font-size: 36px;
}

.dock a {
  display: flex;
  flex-direction: column;
  align-items: center;
  height: 175px;
  padding-top: 12px;
}

.dock svg {
  width: 62px;
}

.dock a > span {
  line-height: 40px;
}

.dock .index {
  padding: 10px 0 0;
  line-height: 50px;
  color: #cb3a2e;
}

.peak {
  border: 11px solid transparent;
  border-top: none;
  border-bottom: 7px solid #77777a;
}

.index b {
  margin-top: 4px;
  font-size: 39px;
}

.index p {
  display: flex;
  gap: 50px;
  padding-left: 28px;
}

.index p span {
  color: #8c8c90;
}

.dock .buy span {
  background: linear-gradient(90deg, #dc3f32, #f0a566);
  -webkit-background-clip: text;
  background-clip: text;
  color: transparent;
  font-size: 38px;
  font-style: italic;
  font-weight: 900;
}

.dock .add {
  color: #4576be;
}
</style>
